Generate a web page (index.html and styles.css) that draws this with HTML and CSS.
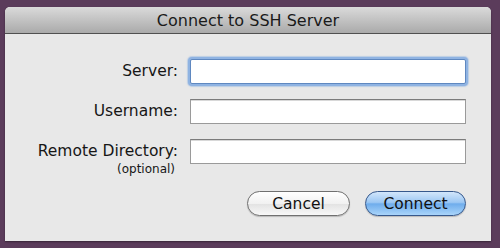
FILE: index.html
```html
<!DOCTYPE html>
<html lang="en">
  <head>
    <meta charset="UTF-8" />
    <title>Connect to SSH Server</title>
    <link rel="stylesheet" href="styles.css">
  </head>
  <body>
    <div class="sheet">
      <!-- TITLE BAR -->
      <div class="sheet-title">Connect to SSH Server</div>

      <!-- FORM -->
      <form class="sheet-body">
        <div class="field-grid">
          <label for="server">Server:</label>
          <input type="text" id="server" class="focused" />

          <label for="username">Username:</label>
          <input type="text" id="username" />

          <label for="remote" class="label-stack">
            Remote Directory:
            <span class="hint">(optional)</span>
          </label>
          <input type="text" id="remote" />
        </div>

        <div class="actions">
          <button type="button" class="btn">Cancel</button>
          <button type="submit" class="btn btn-default">Connect</button>
        </div>
      </form>
    </div>
  </body>
</html>
```

FILE: styles.css
```css
/* RESET */
* {
  margin: 0;
  padding: 0;
  box-sizing: border-box;
}

body {
  font-family: "DejaVu Sans", "Liberation Sans", sans-serif;
  background: #5b3c5b;
  width: 500px;
  height: 248px;
  padding: 7px 9px 7px 5px;
  overflow: hidden;
}

/* WINDOW */
.sheet {
  width: 486px;
  height: 234px;
  background: #e8e8e8;
  border-radius: 5px 5px 0 0;
  overflow: hidden;
  box-shadow: 0 1px 2px rgba(0, 0, 0, 0.4);
  display: flex;
  flex-direction: column;
}
.sheet-title {
  height: 27px;
  background: linear-gradient(#dadada, #aaaaaa);
  border-bottom: 1px solid #505050;
  color: #1a1a1a;
  font-size: 16px;
  line-height: 27px;
  text-align: center;
}

.sheet-body {
  flex: 1;
  padding: 25px 25px 0 0;
}

/* FIELDS */
.field-grid {
  display: grid;
  grid-template-columns: 173px 1fr;
  grid-auto-rows: 25px;
  column-gap: 12px;
  row-gap: 15px;
}
.field-grid label {
  text-align: right;
  font-size: 15.5px;
  color: #161616;
  line-height: 25px;
  white-space: nowrap;
}
.label-stack {
  display: flex;
  flex-direction: column;
  align-items: flex-end;
}
.hint {
  font-size: 12px;
  line-height: 11px;
  margin-right: 3px;
}
.field-grid input {
  height: 25px;
  border: 1px solid #9a9a9a;
  border-top-color: #7c7c7c;
  background: #fff;
  box-shadow: inset 0 1px 0 #d8d8d8;
  font-size: 13px;
  outline: none;
}
.field-grid input.focused {
  border-color: #5f88c0;
  box-shadow: 0 0 0 2px #8fb3e2, 0 0 1px 3px rgba(143, 179, 226, 0.5);
  border-radius: 2px;
}

/* BUTTONS */
.actions {
  display: flex;
  justify-content: flex-end;
  gap: 15px;
  margin-top: 27px;
}
.btn {
  width: 103px;
  height: 25px;
  border-radius: 13px;
  border: 1px solid #707070;
  background: linear-gradient(#ffffff 0%, #f1f1f1 50%, #e2e2e2 51%, #f8f8f8 100%);
  font-family: inherit;
  font-size: 15.5px;
  color: #111;
  box-shadow: 0 1px 1px rgba(0, 0, 0, 0.2);
}
.btn-default {
  width: 101px;
  border-color: #36588c;
  background: linear-gradient(#d2e6fb 0%, #9cc7f3 45%, #6fadec 52%, #a9d4fa 100%);
}
```
